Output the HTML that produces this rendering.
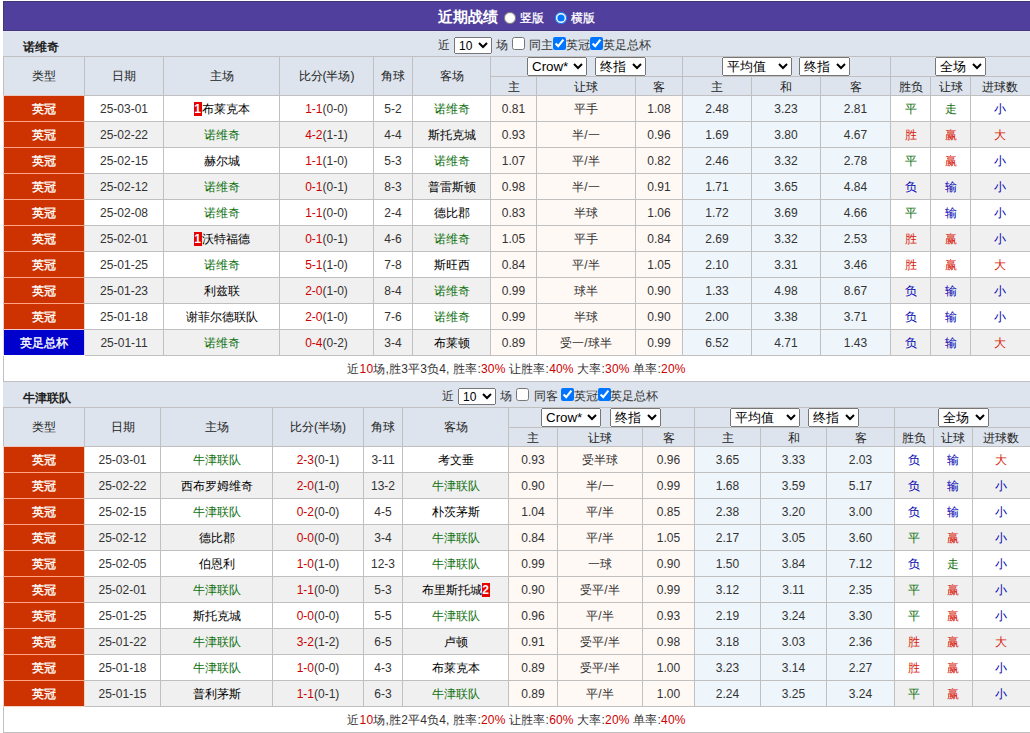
<!DOCTYPE html><html><head><meta charset="utf-8"><style>
html,body{margin:0;padding:0;background:#fff;overflow:hidden}
body{width:1030px;height:733px;position:relative;font-family:"Liberation Sans",sans-serif;font-size:12px;color:#000}
body>div{position:absolute}
.t{text-align:center;white-space:nowrap;overflow:visible}
.b{font-weight:bold;color:#222}
.r{color:#cc0000}
.bd{display:inline-block;background:#e60000;color:#fff;font-weight:bold;width:8px;height:14px;line-height:14px;text-align:center;vertical-align:middle;font-size:12px;overflow:hidden;margin-top:-2px}
.pb{left:3px;top:1px;width:1040px;height:28px;background:#513f9d;border:1px solid #433777}
.pl{left:3px;top:31px;width:1040px;height:1px;background:#e4e4f8}
.ttl{height:30px;line-height:30px;color:#fff;font-size:12px;white-space:nowrap}
.ttl b{font-size:15px}
.rd{position:absolute;margin:0;width:12px;height:12px}
.ct{height:17px;line-height:17px;color:#333;white-space:nowrap}
.cb{position:absolute;margin:0;width:13px;height:13px}
.s10{position:absolute;font-size:12px;height:17px;width:38px;padding:0;margin:0;font-family:"Liberation Sans",sans-serif}
select.sh{position:absolute;height:19px;font-size:13.33px;font-family:"Liberation Sans",sans-serif;padding:0;margin:0}
</style></head><body><div class="pb"></div><div class="ttl" style="left:438px;top:2px"><b>近期战绩</b></div><input type="radio" name="v" class="rd" style="left:504px;top:12px"><div class="ttl" style="left:520px;top:3px;-webkit-text-stroke:0.3px #fff">竖版</div><input type="radio" name="v" class="rd" checked style="left:555px;top:12px"><div class="ttl" style="left:571px;top:3px;-webkit-text-stroke:0.3px #fff">横版</div><div style="left:3px;top:31px;width:1040px;height:25px;background:#dde4ed;"></div><div class="t b" style="left:23px;top:39px;height:16px;line-height:16px;text-align:left">诺维奇</div><div class="ct" style="left:438px;top:37px">近</div><select class="s10" style="left:454px;top:37px"><option>10</option></select><div class="ct" style="left:496px;top:37px">场</div><input type="checkbox" class="cb" style="left:512px;top:37px"><div class="ct" style="left:529px;top:37px">同主</div><input type="checkbox" checked class="cb" style="left:553px;top:37px"><div class="ct" style="left:566px;top:37px">英冠</div><input type="checkbox" checked class="cb" style="left:590px;top:37px"><div class="ct" style="left:603px;top:37px">英足总杯</div><div style="left:3px;top:56px;width:1040px;height:39px;background:#dde4ed;"></div><div style="left:3px;top:96px;width:1040px;height:25px;background:#ffffff;"></div><div style="left:490px;top:96px;width:192px;height:25px;background:#fff9f5;"></div><div style="left:682px;top:96px;width:208px;height:25px;background:#eef6fb;"></div><div style="left:3px;top:96px;width:81px;height:25px;background:#cc3300;"></div><div style="left:3px;top:122px;width:1040px;height:25px;background:#f0f0f0;"></div><div style="left:490px;top:122px;width:192px;height:25px;background:#fff9f5;"></div><div style="left:682px;top:122px;width:208px;height:25px;background:#eef6fb;"></div><div style="left:3px;top:122px;width:81px;height:25px;background:#cc3300;"></div><div style="left:3px;top:148px;width:1040px;height:25px;background:#ffffff;"></div><div style="left:490px;top:148px;width:192px;height:25px;background:#fff9f5;"></div><div style="left:682px;top:148px;width:208px;height:25px;background:#eef6fb;"></div><div style="left:3px;top:148px;width:81px;height:25px;background:#cc3300;"></div><div style="left:3px;top:174px;width:1040px;height:25px;background:#f0f0f0;"></div><div style="left:490px;top:174px;width:192px;height:25px;background:#fff9f5;"></div><div style="left:682px;top:174px;width:208px;height:25px;background:#eef6fb;"></div><div style="left:3px;top:174px;width:81px;height:25px;background:#cc3300;"></div><div style="left:3px;top:200px;width:1040px;height:25px;background:#ffffff;"></div><div style="left:490px;top:200px;width:192px;height:25px;background:#fff9f5;"></div><div style="left:682px;top:200px;width:208px;height:25px;background:#eef6fb;"></div><div style="left:3px;top:200px;width:81px;height:25px;background:#cc3300;"></div><div style="left:3px;top:226px;width:1040px;height:25px;background:#f0f0f0;"></div><div style="left:490px;top:226px;width:192px;height:25px;background:#fff9f5;"></div><div style="left:682px;top:226px;width:208px;height:25px;background:#eef6fb;"></div><div style="left:3px;top:226px;width:81px;height:25px;background:#cc3300;"></div><div style="left:3px;top:252px;width:1040px;height:25px;background:#ffffff;"></div><div style="left:490px;top:252px;width:192px;height:25px;background:#fff9f5;"></div><div style="left:682px;top:252px;width:208px;height:25px;background:#eef6fb;"></div><div style="left:3px;top:252px;width:81px;height:25px;background:#cc3300;"></div><div style="left:3px;top:278px;width:1040px;height:25px;background:#f0f0f0;"></div><div style="left:490px;top:278px;width:192px;height:25px;background:#fff9f5;"></div><div style="left:682px;top:278px;width:208px;height:25px;background:#eef6fb;"></div><div style="left:3px;top:278px;width:81px;height:25px;background:#cc3300;"></div><div style="left:3px;top:304px;width:1040px;height:25px;background:#ffffff;"></div><div style="left:490px;top:304px;width:192px;height:25px;background:#fff9f5;"></div><div style="left:682px;top:304px;width:208px;height:25px;background:#eef6fb;"></div><div style="left:3px;top:304px;width:81px;height:25px;background:#cc3300;"></div><div style="left:3px;top:330px;width:1040px;height:25px;background:#f0f0f0;"></div><div style="left:490px;top:330px;width:192px;height:25px;background:#fff9f5;"></div><div style="left:682px;top:330px;width:208px;height:25px;background:#eef6fb;"></div><div style="left:3px;top:330px;width:81px;height:25px;background:#0000cc;"></div><div style="left:3px;top:356px;width:1040px;height:25px;background:#ffffff;"></div><div style="left:3px;top:56px;width:1040px;height:1px;background:#c0c0c0;"></div><div style="left:490px;top:76px;width:1040px;height:1px;background:#c0c0c0;"></div><div style="left:3px;top:95px;width:1040px;height:1px;background:#c0c0c0;"></div><div style="left:3px;top:121px;width:1040px;height:1px;background:#c0c0c0;"></div><div style="left:3px;top:147px;width:1040px;height:1px;background:#c0c0c0;"></div><div style="left:3px;top:173px;width:1040px;height:1px;background:#c0c0c0;"></div><div style="left:3px;top:199px;width:1040px;height:1px;background:#c0c0c0;"></div><div style="left:3px;top:225px;width:1040px;height:1px;background:#c0c0c0;"></div><div style="left:3px;top:251px;width:1040px;height:1px;background:#c0c0c0;"></div><div style="left:3px;top:277px;width:1040px;height:1px;background:#c0c0c0;"></div><div style="left:3px;top:303px;width:1040px;height:1px;background:#c0c0c0;"></div><div style="left:3px;top:329px;width:1040px;height:1px;background:#c0c0c0;"></div><div style="left:3px;top:355px;width:1040px;height:1px;background:#c0c0c0;"></div><div style="left:3px;top:381px;width:1040px;height:1px;background:#c0c0c0;"></div><div style="left:3px;top:56px;width:1px;height:326px;background:#c0c0c0;"></div><div style="left:84px;top:56px;width:1px;height:300px;background:#c0c0c0;"></div><div style="left:163px;top:56px;width:1px;height:300px;background:#c0c0c0;"></div><div style="left:279px;top:56px;width:1px;height:300px;background:#c0c0c0;"></div><div style="left:373px;top:56px;width:1px;height:300px;background:#c0c0c0;"></div><div style="left:412px;top:56px;width:1px;height:300px;background:#c0c0c0;"></div><div style="left:490px;top:56px;width:1px;height:300px;background:#c0c0c0;"></div><div style="left:536px;top:76px;width:1px;height:280px;background:#c0c0c0;"></div><div style="left:635px;top:76px;width:1px;height:280px;background:#c0c0c0;"></div><div style="left:682px;top:56px;width:1px;height:300px;background:#c0c0c0;"></div><div style="left:751px;top:76px;width:1px;height:280px;background:#c0c0c0;"></div><div style="left:820px;top:76px;width:1px;height:280px;background:#c0c0c0;"></div><div style="left:890px;top:56px;width:1px;height:300px;background:#c0c0c0;"></div><div style="left:930px;top:76px;width:1px;height:280px;background:#c0c0c0;"></div><div style="left:970px;top:76px;width:1px;height:280px;background:#c0c0c0;"></div><div style="left:3px;top:95px;width:1px;height:26px;background:#f3d2c6;"></div><div style="left:84px;top:96px;width:1px;height:25px;background:#f3d2c6;"></div><div style="left:4px;top:121px;width:80px;height:1px;background:#ffa585;"></div><div style="left:3px;top:122px;width:1px;height:25px;background:#f3d2c6;"></div><div style="left:84px;top:122px;width:1px;height:25px;background:#f3d2c6;"></div><div style="left:4px;top:147px;width:80px;height:1px;background:#ffa585;"></div><div style="left:3px;top:148px;width:1px;height:25px;background:#f3d2c6;"></div><div style="left:84px;top:148px;width:1px;height:25px;background:#f3d2c6;"></div><div style="left:4px;top:173px;width:80px;height:1px;background:#ffa585;"></div><div style="left:3px;top:174px;width:1px;height:25px;background:#f3d2c6;"></div><div style="left:84px;top:174px;width:1px;height:25px;background:#f3d2c6;"></div><div style="left:4px;top:199px;width:80px;height:1px;background:#ffa585;"></div><div style="left:3px;top:200px;width:1px;height:25px;background:#f3d2c6;"></div><div style="left:84px;top:200px;width:1px;height:25px;background:#f3d2c6;"></div><div style="left:4px;top:225px;width:80px;height:1px;background:#ffa585;"></div><div style="left:3px;top:226px;width:1px;height:25px;background:#f3d2c6;"></div><div style="left:84px;top:226px;width:1px;height:25px;background:#f3d2c6;"></div><div style="left:4px;top:251px;width:80px;height:1px;background:#ffa585;"></div><div style="left:3px;top:252px;width:1px;height:25px;background:#f3d2c6;"></div><div style="left:84px;top:252px;width:1px;height:25px;background:#f3d2c6;"></div><div style="left:4px;top:277px;width:80px;height:1px;background:#ffa585;"></div><div style="left:3px;top:278px;width:1px;height:25px;background:#f3d2c6;"></div><div style="left:84px;top:278px;width:1px;height:25px;background:#f3d2c6;"></div><div style="left:4px;top:303px;width:80px;height:1px;background:#ffa585;"></div><div style="left:3px;top:304px;width:1px;height:25px;background:#f3d2c6;"></div><div style="left:84px;top:304px;width:1px;height:25px;background:#f3d2c6;"></div><div style="left:4px;top:329px;width:80px;height:1px;background:#f4c8d0;"></div><div style="left:3px;top:330px;width:1px;height:25px;background:#e8d0e8;"></div><div style="left:84px;top:330px;width:1px;height:25px;background:#e8d0e8;"></div><div style="left:3px;top:355px;width:82px;height:1px;background:#ffffff;"></div><div style="left:4px;top:95px;width:80px;height:1px;background:#e8c8c0;"></div><div class="t" style="left:4px;top:57px;width:80px;height:38px;line-height:38px;color:#222">类型</div><div class="t" style="left:85px;top:57px;width:78px;height:38px;line-height:38px;color:#222">日期</div><div class="t" style="left:164px;top:57px;width:115px;height:38px;line-height:38px;color:#222">主场</div><div class="t" style="left:280px;top:57px;width:93px;height:38px;line-height:38px;color:#222">比分(半场)</div><div class="t" style="left:374px;top:57px;width:38px;height:38px;line-height:38px;color:#222">角球</div><div class="t" style="left:413px;top:57px;width:77px;height:38px;line-height:38px;color:#222">客场</div><div class="t" style="left:491px;top:78px;width:45px;height:18px;line-height:18px;color:#222">主</div><div class="t" style="left:537px;top:78px;width:98px;height:18px;line-height:18px;color:#222">让球</div><div class="t" style="left:636px;top:78px;width:46px;height:18px;line-height:18px;color:#222">客</div><div class="t" style="left:683px;top:78px;width:68px;height:18px;line-height:18px;color:#222">主</div><div class="t" style="left:752px;top:78px;width:68px;height:18px;line-height:18px;color:#222">和</div><div class="t" style="left:821px;top:78px;width:69px;height:18px;line-height:18px;color:#222">客</div><div class="t" style="left:891px;top:78px;width:39px;height:18px;line-height:18px;color:#222">胜负</div><div class="t" style="left:931px;top:78px;width:39px;height:18px;line-height:18px;color:#222">让球</div><div class="t" style="left:971px;top:78px;width:58px;height:18px;line-height:18px;color:#222">进球数</div><select class="sh" style="left:527px;top:57px;width:60px"><option>Crow*</option></select><select class="sh" style="left:595px;top:57px;width:51px"><option>终指</option></select><select class="sh" style="left:722px;top:57px;width:70px"><option>平均值</option></select><select class="sh" style="left:799px;top:57px;width:51px"><option>终指</option></select><select class="sh" style="left:935px;top:57px;width:51px"><option>全场</option></select><div class="t" style="left:4px;top:97px;width:80px;height:25px;line-height:25px;color:#fff;-webkit-text-stroke:0.35px #fff">英冠</div><div class="t" style="left:85px;top:97px;width:78px;height:25px;line-height:25px;color:#333">25-03-01</div><div class="t" style="left:164px;top:97px;width:115px;height:25px;line-height:25px;"><span class="bd">1</span>布莱克本</div><div class="t" style="left:280px;top:97px;width:93px;height:25px;line-height:25px;color:#333"><span style="color:#cc0000">1-1</span>(0-0)</div><div class="t" style="left:374px;top:97px;width:38px;height:25px;line-height:25px;color:#333">5-2</div><div class="t" style="left:413px;top:97px;width:77px;height:25px;line-height:25px;"><span style="color:#0e700e">诺维奇</span></div><div class="t" style="left:491px;top:97px;width:45px;height:25px;line-height:25px;color:#333">0.81</div><div class="t" style="left:537px;top:97px;width:98px;height:25px;line-height:25px;color:#333">平手</div><div class="t" style="left:636px;top:97px;width:46px;height:25px;line-height:25px;color:#333">1.08</div><div class="t" style="left:683px;top:97px;width:68px;height:25px;line-height:25px;color:#333">2.48</div><div class="t" style="left:752px;top:97px;width:68px;height:25px;line-height:25px;color:#333">3.23</div><div class="t" style="left:821px;top:97px;width:69px;height:25px;line-height:25px;color:#333">2.81</div><div class="t" style="left:891px;top:97px;width:39px;height:25px;line-height:25px;color:#0e700e">平</div><div class="t" style="left:931px;top:97px;width:39px;height:25px;line-height:25px;color:#0e700e">走</div><div class="t" style="left:971px;top:97px;width:58px;height:25px;line-height:25px;color:#0000b0">小</div><div class="t" style="left:4px;top:123px;width:80px;height:25px;line-height:25px;color:#fff;-webkit-text-stroke:0.35px #fff">英冠</div><div class="t" style="left:85px;top:123px;width:78px;height:25px;line-height:25px;color:#333">25-02-22</div><div class="t" style="left:164px;top:123px;width:115px;height:25px;line-height:25px;"><span style="color:#0e700e">诺维奇</span></div><div class="t" style="left:280px;top:123px;width:93px;height:25px;line-height:25px;color:#333"><span style="color:#cc0000">4-2</span>(1-1)</div><div class="t" style="left:374px;top:123px;width:38px;height:25px;line-height:25px;color:#333">4-4</div><div class="t" style="left:413px;top:123px;width:77px;height:25px;line-height:25px;">斯托克城</div><div class="t" style="left:491px;top:123px;width:45px;height:25px;line-height:25px;color:#333">0.93</div><div class="t" style="left:537px;top:123px;width:98px;height:25px;line-height:25px;color:#333">半/一</div><div class="t" style="left:636px;top:123px;width:46px;height:25px;line-height:25px;color:#333">0.96</div><div class="t" style="left:683px;top:123px;width:68px;height:25px;line-height:25px;color:#333">1.69</div><div class="t" style="left:752px;top:123px;width:68px;height:25px;line-height:25px;color:#333">3.80</div><div class="t" style="left:821px;top:123px;width:69px;height:25px;line-height:25px;color:#333">4.67</div><div class="t" style="left:891px;top:123px;width:39px;height:25px;line-height:25px;color:#d81808">胜</div><div class="t" style="left:931px;top:123px;width:39px;height:25px;line-height:25px;color:#d81808">赢</div><div class="t" style="left:971px;top:123px;width:58px;height:25px;line-height:25px;color:#d81808">大</div><div class="t" style="left:4px;top:149px;width:80px;height:25px;line-height:25px;color:#fff;-webkit-text-stroke:0.35px #fff">英冠</div><div class="t" style="left:85px;top:149px;width:78px;height:25px;line-height:25px;color:#333">25-02-15</div><div class="t" style="left:164px;top:149px;width:115px;height:25px;line-height:25px;">赫尔城</div><div class="t" style="left:280px;top:149px;width:93px;height:25px;line-height:25px;color:#333"><span style="color:#cc0000">1-1</span>(1-0)</div><div class="t" style="left:374px;top:149px;width:38px;height:25px;line-height:25px;color:#333">5-3</div><div class="t" style="left:413px;top:149px;width:77px;height:25px;line-height:25px;"><span style="color:#0e700e">诺维奇</span></div><div class="t" style="left:491px;top:149px;width:45px;height:25px;line-height:25px;color:#333">1.07</div><div class="t" style="left:537px;top:149px;width:98px;height:25px;line-height:25px;color:#333">平/半</div><div class="t" style="left:636px;top:149px;width:46px;height:25px;line-height:25px;color:#333">0.82</div><div class="t" style="left:683px;top:149px;width:68px;height:25px;line-height:25px;color:#333">2.46</div><div class="t" style="left:752px;top:149px;width:68px;height:25px;line-height:25px;color:#333">3.32</div><div class="t" style="left:821px;top:149px;width:69px;height:25px;line-height:25px;color:#333">2.78</div><div class="t" style="left:891px;top:149px;width:39px;height:25px;line-height:25px;color:#0e700e">平</div><div class="t" style="left:931px;top:149px;width:39px;height:25px;line-height:25px;color:#d81808">赢</div><div class="t" style="left:971px;top:149px;width:58px;height:25px;line-height:25px;color:#0000b0">小</div><div class="t" style="left:4px;top:175px;width:80px;height:25px;line-height:25px;color:#fff;-webkit-text-stroke:0.35px #fff">英冠</div><div class="t" style="left:85px;top:175px;width:78px;height:25px;line-height:25px;color:#333">25-02-12</div><div class="t" style="left:164px;top:175px;width:115px;height:25px;line-height:25px;"><span style="color:#0e700e">诺维奇</span></div><div class="t" style="left:280px;top:175px;width:93px;height:25px;line-height:25px;color:#333"><span style="color:#cc0000">0-1</span>(0-1)</div><div class="t" style="left:374px;top:175px;width:38px;height:25px;line-height:25px;color:#333">8-3</div><div class="t" style="left:413px;top:175px;width:77px;height:25px;line-height:25px;">普雷斯顿</div><div class="t" style="left:491px;top:175px;width:45px;height:25px;line-height:25px;color:#333">0.98</div><div class="t" style="left:537px;top:175px;width:98px;height:25px;line-height:25px;color:#333">半/一</div><div class="t" style="left:636px;top:175px;width:46px;height:25px;line-height:25px;color:#333">0.91</div><div class="t" style="left:683px;top:175px;width:68px;height:25px;line-height:25px;color:#333">1.71</div><div class="t" style="left:752px;top:175px;width:68px;height:25px;line-height:25px;color:#333">3.65</div><div class="t" style="left:821px;top:175px;width:69px;height:25px;line-height:25px;color:#333">4.84</div><div class="t" style="left:891px;top:175px;width:39px;height:25px;line-height:25px;color:#0000b0">负</div><div class="t" style="left:931px;top:175px;width:39px;height:25px;line-height:25px;color:#0000b0">输</div><div class="t" style="left:971px;top:175px;width:58px;height:25px;line-height:25px;color:#0000b0">小</div><div class="t" style="left:4px;top:201px;width:80px;height:25px;line-height:25px;color:#fff;-webkit-text-stroke:0.35px #fff">英冠</div><div class="t" style="left:85px;top:201px;width:78px;height:25px;line-height:25px;color:#333">25-02-08</div><div class="t" style="left:164px;top:201px;width:115px;height:25px;line-height:25px;"><span style="color:#0e700e">诺维奇</span></div><div class="t" style="left:280px;top:201px;width:93px;height:25px;line-height:25px;color:#333"><span style="color:#cc0000">1-1</span>(0-0)</div><div class="t" style="left:374px;top:201px;width:38px;height:25px;line-height:25px;color:#333">2-4</div><div class="t" style="left:413px;top:201px;width:77px;height:25px;line-height:25px;">德比郡</div><div class="t" style="left:491px;top:201px;width:45px;height:25px;line-height:25px;color:#333">0.83</div><div class="t" style="left:537px;top:201px;width:98px;height:25px;line-height:25px;color:#333">半球</div><div class="t" style="left:636px;top:201px;width:46px;height:25px;line-height:25px;color:#333">1.06</div><div class="t" style="left:683px;top:201px;width:68px;height:25px;line-height:25px;color:#333">1.72</div><div class="t" style="left:752px;top:201px;width:68px;height:25px;line-height:25px;color:#333">3.69</div><div class="t" style="left:821px;top:201px;width:69px;height:25px;line-height:25px;color:#333">4.66</div><div class="t" style="left:891px;top:201px;width:39px;height:25px;line-height:25px;color:#0e700e">平</div><div class="t" style="left:931px;top:201px;width:39px;height:25px;line-height:25px;color:#0000b0">输</div><div class="t" style="left:971px;top:201px;width:58px;height:25px;line-height:25px;color:#0000b0">小</div><div class="t" style="left:4px;top:227px;width:80px;height:25px;line-height:25px;color:#fff;-webkit-text-stroke:0.35px #fff">英冠</div><div class="t" style="left:85px;top:227px;width:78px;height:25px;line-height:25px;color:#333">25-02-01</div><div class="t" style="left:164px;top:227px;width:115px;height:25px;line-height:25px;"><span class="bd">1</span>沃特福德</div><div class="t" style="left:280px;top:227px;width:93px;height:25px;line-height:25px;color:#333"><span style="color:#cc0000">0-1</span>(0-1)</div><div class="t" style="left:374px;top:227px;width:38px;height:25px;line-height:25px;color:#333">4-6</div><div class="t" style="left:413px;top:227px;width:77px;height:25px;line-height:25px;"><span style="color:#0e700e">诺维奇</span></div><div class="t" style="left:491px;top:227px;width:45px;height:25px;line-height:25px;color:#333">1.05</div><div class="t" style="left:537px;top:227px;width:98px;height:25px;line-height:25px;color:#333">平手</div><div class="t" style="left:636px;top:227px;width:46px;height:25px;line-height:25px;color:#333">0.84</div><div class="t" style="left:683px;top:227px;width:68px;height:25px;line-height:25px;color:#333">2.69</div><div class="t" style="left:752px;top:227px;width:68px;height:25px;line-height:25px;color:#333">3.32</div><div class="t" style="left:821px;top:227px;width:69px;height:25px;line-height:25px;color:#333">2.53</div><div class="t" style="left:891px;top:227px;width:39px;height:25px;line-height:25px;color:#d81808">胜</div><div class="t" style="left:931px;top:227px;width:39px;height:25px;line-height:25px;color:#d81808">赢</div><div class="t" style="left:971px;top:227px;width:58px;height:25px;line-height:25px;color:#0000b0">小</div><div class="t" style="left:4px;top:253px;width:80px;height:25px;line-height:25px;color:#fff;-webkit-text-stroke:0.35px #fff">英冠</div><div class="t" style="left:85px;top:253px;width:78px;height:25px;line-height:25px;color:#333">25-01-25</div><div class="t" style="left:164px;top:253px;width:115px;height:25px;line-height:25px;"><span style="color:#0e700e">诺维奇</span></div><div class="t" style="left:280px;top:253px;width:93px;height:25px;line-height:25px;color:#333"><span style="color:#cc0000">5-1</span>(1-0)</div><div class="t" style="left:374px;top:253px;width:38px;height:25px;line-height:25px;color:#333">7-8</div><div class="t" style="left:413px;top:253px;width:77px;height:25px;line-height:25px;">斯旺西</div><div class="t" style="left:491px;top:253px;width:45px;height:25px;line-height:25px;color:#333">0.84</div><div class="t" style="left:537px;top:253px;width:98px;height:25px;line-height:25px;color:#333">平/半</div><div class="t" style="left:636px;top:253px;width:46px;height:25px;line-height:25px;color:#333">1.05</div><div class="t" style="left:683px;top:253px;width:68px;height:25px;line-height:25px;color:#333">2.10</div><div class="t" style="left:752px;top:253px;width:68px;height:25px;line-height:25px;color:#333">3.31</div><div class="t" style="left:821px;top:253px;width:69px;height:25px;line-height:25px;color:#333">3.46</div><div class="t" style="left:891px;top:253px;width:39px;height:25px;line-height:25px;color:#d81808">胜</div><div class="t" style="left:931px;top:253px;width:39px;height:25px;line-height:25px;color:#d81808">赢</div><div class="t" style="left:971px;top:253px;width:58px;height:25px;line-height:25px;color:#d81808">大</div><div class="t" style="left:4px;top:279px;width:80px;height:25px;line-height:25px;color:#fff;-webkit-text-stroke:0.35px #fff">英冠</div><div class="t" style="left:85px;top:279px;width:78px;height:25px;line-height:25px;color:#333">25-01-23</div><div class="t" style="left:164px;top:279px;width:115px;height:25px;line-height:25px;">利兹联</div><div class="t" style="left:280px;top:279px;width:93px;height:25px;line-height:25px;color:#333"><span style="color:#cc0000">2-0</span>(1-0)</div><div class="t" style="left:374px;top:279px;width:38px;height:25px;line-height:25px;color:#333">8-4</div><div class="t" style="left:413px;top:279px;width:77px;height:25px;line-height:25px;"><span style="color:#0e700e">诺维奇</span></div><div class="t" style="left:491px;top:279px;width:45px;height:25px;line-height:25px;color:#333">0.99</div><div class="t" style="left:537px;top:279px;width:98px;height:25px;line-height:25px;color:#333">球半</div><div class="t" style="left:636px;top:279px;width:46px;height:25px;line-height:25px;color:#333">0.90</div><div class="t" style="left:683px;top:279px;width:68px;height:25px;line-height:25px;color:#333">1.33</div><div class="t" style="left:752px;top:279px;width:68px;height:25px;line-height:25px;color:#333">4.98</div><div class="t" style="left:821px;top:279px;width:69px;height:25px;line-height:25px;color:#333">8.67</div><div class="t" style="left:891px;top:279px;width:39px;height:25px;line-height:25px;color:#0000b0">负</div><div class="t" style="left:931px;top:279px;width:39px;height:25px;line-height:25px;color:#0000b0">输</div><div class="t" style="left:971px;top:279px;width:58px;height:25px;line-height:25px;color:#0000b0">小</div><div class="t" style="left:4px;top:305px;width:80px;height:25px;line-height:25px;color:#fff;-webkit-text-stroke:0.35px #fff">英冠</div><div class="t" style="left:85px;top:305px;width:78px;height:25px;line-height:25px;color:#333">25-01-18</div><div class="t" style="left:164px;top:305px;width:115px;height:25px;line-height:25px;">谢菲尔德联队</div><div class="t" style="left:280px;top:305px;width:93px;height:25px;line-height:25px;color:#333"><span style="color:#cc0000">2-0</span>(1-0)</div><div class="t" style="left:374px;top:305px;width:38px;height:25px;line-height:25px;color:#333">7-6</div><div class="t" style="left:413px;top:305px;width:77px;height:25px;line-height:25px;"><span style="color:#0e700e">诺维奇</span></div><div class="t" style="left:491px;top:305px;width:45px;height:25px;line-height:25px;color:#333">0.99</div><div class="t" style="left:537px;top:305px;width:98px;height:25px;line-height:25px;color:#333">半球</div><div class="t" style="left:636px;top:305px;width:46px;height:25px;line-height:25px;color:#333">0.90</div><div class="t" style="left:683px;top:305px;width:68px;height:25px;line-height:25px;color:#333">2.00</div><div class="t" style="left:752px;top:305px;width:68px;height:25px;line-height:25px;color:#333">3.38</div><div class="t" style="left:821px;top:305px;width:69px;height:25px;line-height:25px;color:#333">3.71</div><div class="t" style="left:891px;top:305px;width:39px;height:25px;line-height:25px;color:#0000b0">负</div><div class="t" style="left:931px;top:305px;width:39px;height:25px;line-height:25px;color:#0000b0">输</div><div class="t" style="left:971px;top:305px;width:58px;height:25px;line-height:25px;color:#0000b0">小</div><div class="t" style="left:4px;top:331px;width:80px;height:25px;line-height:25px;color:#fff;-webkit-text-stroke:0.35px #fff">英足总杯</div><div class="t" style="left:85px;top:331px;width:78px;height:25px;line-height:25px;color:#333">25-01-11</div><div class="t" style="left:164px;top:331px;width:115px;height:25px;line-height:25px;"><span style="color:#0e700e">诺维奇</span></div><div class="t" style="left:280px;top:331px;width:93px;height:25px;line-height:25px;color:#333"><span style="color:#cc0000">0-4</span>(0-2)</div><div class="t" style="left:374px;top:331px;width:38px;height:25px;line-height:25px;color:#333">3-4</div><div class="t" style="left:413px;top:331px;width:77px;height:25px;line-height:25px;">布莱顿</div><div class="t" style="left:491px;top:331px;width:45px;height:25px;line-height:25px;color:#333">0.89</div><div class="t" style="left:537px;top:331px;width:98px;height:25px;line-height:25px;color:#333">受一/球半</div><div class="t" style="left:636px;top:331px;width:46px;height:25px;line-height:25px;color:#333">0.99</div><div class="t" style="left:683px;top:331px;width:68px;height:25px;line-height:25px;color:#333">6.52</div><div class="t" style="left:752px;top:331px;width:68px;height:25px;line-height:25px;color:#333">4.71</div><div class="t" style="left:821px;top:331px;width:69px;height:25px;line-height:25px;color:#333">1.43</div><div class="t" style="left:891px;top:331px;width:39px;height:25px;line-height:25px;color:#0000b0">负</div><div class="t" style="left:931px;top:331px;width:39px;height:25px;line-height:25px;color:#0000b0">输</div><div class="t" style="left:971px;top:331px;width:58px;height:25px;line-height:25px;color:#d81808">大</div><div class="t" style="left:3px;top:357px;width:1027px;height:25px;line-height:25px;color:#333;letter-spacing:0.18px">近<span class="r">10</span>场,胜3平3负4, 胜率:<span class="r">30%</span> 让胜率:<span class="r">40%</span> 大率:<span class="r">30%</span> 单率:<span class="r">20%</span></div><div style="left:3px;top:382px;width:1040px;height:25px;background:#dde4ed;"></div><div class="t b" style="left:23px;top:390px;height:16px;line-height:16px;text-align:left">牛津联队</div><div class="ct" style="left:442px;top:388px">近</div><select class="s10" style="left:458px;top:388px"><option>10</option></select><div class="ct" style="left:500px;top:388px">场</div><input type="checkbox" class="cb" style="left:516px;top:388px"><div class="ct" style="left:534px;top:388px">同客</div><input type="checkbox" checked class="cb" style="left:561px;top:388px"><div class="ct" style="left:574px;top:388px">英冠</div><input type="checkbox" checked class="cb" style="left:598px;top:388px"><div class="ct" style="left:610px;top:388px">英足总杯</div><div style="left:3px;top:407px;width:1040px;height:39px;background:#dde4ed;"></div><div style="left:3px;top:447px;width:1040px;height:25px;background:#ffffff;"></div><div style="left:508px;top:447px;width:186px;height:25px;background:#fff9f5;"></div><div style="left:694px;top:447px;width:200px;height:25px;background:#eef6fb;"></div><div style="left:3px;top:447px;width:81px;height:25px;background:#cc3300;"></div><div style="left:3px;top:473px;width:1040px;height:25px;background:#f0f0f0;"></div><div style="left:508px;top:473px;width:186px;height:25px;background:#fff9f5;"></div><div style="left:694px;top:473px;width:200px;height:25px;background:#eef6fb;"></div><div style="left:3px;top:473px;width:81px;height:25px;background:#cc3300;"></div><div style="left:3px;top:499px;width:1040px;height:25px;background:#ffffff;"></div><div style="left:508px;top:499px;width:186px;height:25px;background:#fff9f5;"></div><div style="left:694px;top:499px;width:200px;height:25px;background:#eef6fb;"></div><div style="left:3px;top:499px;width:81px;height:25px;background:#cc3300;"></div><div style="left:3px;top:525px;width:1040px;height:25px;background:#f0f0f0;"></div><div style="left:508px;top:525px;width:186px;height:25px;background:#fff9f5;"></div><div style="left:694px;top:525px;width:200px;height:25px;background:#eef6fb;"></div><div style="left:3px;top:525px;width:81px;height:25px;background:#cc3300;"></div><div style="left:3px;top:551px;width:1040px;height:25px;background:#ffffff;"></div><div style="left:508px;top:551px;width:186px;height:25px;background:#fff9f5;"></div><div style="left:694px;top:551px;width:200px;height:25px;background:#eef6fb;"></div><div style="left:3px;top:551px;width:81px;height:25px;background:#cc3300;"></div><div style="left:3px;top:577px;width:1040px;height:25px;background:#f0f0f0;"></div><div style="left:508px;top:577px;width:186px;height:25px;background:#fff9f5;"></div><div style="left:694px;top:577px;width:200px;height:25px;background:#eef6fb;"></div><div style="left:3px;top:577px;width:81px;height:25px;background:#cc3300;"></div><div style="left:3px;top:603px;width:1040px;height:25px;background:#ffffff;"></div><div style="left:508px;top:603px;width:186px;height:25px;background:#fff9f5;"></div><div style="left:694px;top:603px;width:200px;height:25px;background:#eef6fb;"></div><div style="left:3px;top:603px;width:81px;height:25px;background:#cc3300;"></div><div style="left:3px;top:629px;width:1040px;height:25px;background:#f0f0f0;"></div><div style="left:508px;top:629px;width:186px;height:25px;background:#fff9f5;"></div><div style="left:694px;top:629px;width:200px;height:25px;background:#eef6fb;"></div><div style="left:3px;top:629px;width:81px;height:25px;background:#cc3300;"></div><div style="left:3px;top:655px;width:1040px;height:25px;background:#ffffff;"></div><div style="left:508px;top:655px;width:186px;height:25px;background:#fff9f5;"></div><div style="left:694px;top:655px;width:200px;height:25px;background:#eef6fb;"></div><div style="left:3px;top:655px;width:81px;height:25px;background:#cc3300;"></div><div style="left:3px;top:681px;width:1040px;height:25px;background:#f0f0f0;"></div><div style="left:508px;top:681px;width:186px;height:25px;background:#fff9f5;"></div><div style="left:694px;top:681px;width:200px;height:25px;background:#eef6fb;"></div><div style="left:3px;top:681px;width:81px;height:25px;background:#cc3300;"></div><div style="left:3px;top:707px;width:1040px;height:25px;background:#ffffff;"></div><div style="left:3px;top:407px;width:1040px;height:1px;background:#c0c0c0;"></div><div style="left:508px;top:427px;width:1040px;height:1px;background:#c0c0c0;"></div><div style="left:3px;top:446px;width:1040px;height:1px;background:#c0c0c0;"></div><div style="left:3px;top:472px;width:1040px;height:1px;background:#c0c0c0;"></div><div style="left:3px;top:498px;width:1040px;height:1px;background:#c0c0c0;"></div><div style="left:3px;top:524px;width:1040px;height:1px;background:#c0c0c0;"></div><div style="left:3px;top:550px;width:1040px;height:1px;background:#c0c0c0;"></div><div style="left:3px;top:576px;width:1040px;height:1px;background:#c0c0c0;"></div><div style="left:3px;top:602px;width:1040px;height:1px;background:#c0c0c0;"></div><div style="left:3px;top:628px;width:1040px;height:1px;background:#c0c0c0;"></div><div style="left:3px;top:654px;width:1040px;height:1px;background:#c0c0c0;"></div><div style="left:3px;top:680px;width:1040px;height:1px;background:#c0c0c0;"></div><div style="left:3px;top:706px;width:1040px;height:1px;background:#c0c0c0;"></div><div style="left:3px;top:732px;width:1040px;height:1px;background:#c0c0c0;"></div><div style="left:3px;top:407px;width:1px;height:326px;background:#c0c0c0;"></div><div style="left:84px;top:407px;width:1px;height:300px;background:#c0c0c0;"></div><div style="left:160px;top:407px;width:1px;height:300px;background:#c0c0c0;"></div><div style="left:272px;top:407px;width:1px;height:300px;background:#c0c0c0;"></div><div style="left:363px;top:407px;width:1px;height:300px;background:#c0c0c0;"></div><div style="left:402px;top:407px;width:1px;height:300px;background:#c0c0c0;"></div><div style="left:508px;top:407px;width:1px;height:300px;background:#c0c0c0;"></div><div style="left:557px;top:427px;width:1px;height:280px;background:#c0c0c0;"></div><div style="left:642px;top:427px;width:1px;height:280px;background:#c0c0c0;"></div><div style="left:694px;top:407px;width:1px;height:300px;background:#c0c0c0;"></div><div style="left:760px;top:427px;width:1px;height:280px;background:#c0c0c0;"></div><div style="left:826px;top:427px;width:1px;height:280px;background:#c0c0c0;"></div><div style="left:894px;top:407px;width:1px;height:300px;background:#c0c0c0;"></div><div style="left:933px;top:427px;width:1px;height:280px;background:#c0c0c0;"></div><div style="left:972px;top:427px;width:1px;height:280px;background:#c0c0c0;"></div><div style="left:3px;top:446px;width:1px;height:26px;background:#f3d2c6;"></div><div style="left:84px;top:447px;width:1px;height:25px;background:#f3d2c6;"></div><div style="left:4px;top:472px;width:80px;height:1px;background:#ffa585;"></div><div style="left:3px;top:473px;width:1px;height:25px;background:#f3d2c6;"></div><div style="left:84px;top:473px;width:1px;height:25px;background:#f3d2c6;"></div><div style="left:4px;top:498px;width:80px;height:1px;background:#ffa585;"></div><div style="left:3px;top:499px;width:1px;height:25px;background:#f3d2c6;"></div><div style="left:84px;top:499px;width:1px;height:25px;background:#f3d2c6;"></div><div style="left:4px;top:524px;width:80px;height:1px;background:#ffa585;"></div><div style="left:3px;top:525px;width:1px;height:25px;background:#f3d2c6;"></div><div style="left:84px;top:525px;width:1px;height:25px;background:#f3d2c6;"></div><div style="left:4px;top:550px;width:80px;height:1px;background:#ffa585;"></div><div style="left:3px;top:551px;width:1px;height:25px;background:#f3d2c6;"></div><div style="left:84px;top:551px;width:1px;height:25px;background:#f3d2c6;"></div><div style="left:4px;top:576px;width:80px;height:1px;background:#ffa585;"></div><div style="left:3px;top:577px;width:1px;height:25px;background:#f3d2c6;"></div><div style="left:84px;top:577px;width:1px;height:25px;background:#f3d2c6;"></div><div style="left:4px;top:602px;width:80px;height:1px;background:#ffa585;"></div><div style="left:3px;top:603px;width:1px;height:25px;background:#f3d2c6;"></div><div style="left:84px;top:603px;width:1px;height:25px;background:#f3d2c6;"></div><div style="left:4px;top:628px;width:80px;height:1px;background:#ffa585;"></div><div style="left:3px;top:629px;width:1px;height:25px;background:#f3d2c6;"></div><div style="left:84px;top:629px;width:1px;height:25px;background:#f3d2c6;"></div><div style="left:4px;top:654px;width:80px;height:1px;background:#ffa585;"></div><div style="left:3px;top:655px;width:1px;height:25px;background:#f3d2c6;"></div><div style="left:84px;top:655px;width:1px;height:25px;background:#f3d2c6;"></div><div style="left:4px;top:680px;width:80px;height:1px;background:#ffa585;"></div><div style="left:3px;top:681px;width:1px;height:25px;background:#f3d2c6;"></div><div style="left:84px;top:681px;width:1px;height:25px;background:#f3d2c6;"></div><div style="left:3px;top:706px;width:82px;height:1px;background:#f3d2c6;"></div><div style="left:4px;top:446px;width:80px;height:1px;background:#e8c8c0;"></div><div class="t" style="left:4px;top:408px;width:80px;height:38px;line-height:38px;color:#222">类型</div><div class="t" style="left:85px;top:408px;width:75px;height:38px;line-height:38px;color:#222">日期</div><div class="t" style="left:161px;top:408px;width:111px;height:38px;line-height:38px;color:#222">主场</div><div class="t" style="left:273px;top:408px;width:90px;height:38px;line-height:38px;color:#222">比分(半场)</div><div class="t" style="left:364px;top:408px;width:38px;height:38px;line-height:38px;color:#222">角球</div><div class="t" style="left:403px;top:408px;width:105px;height:38px;line-height:38px;color:#222">客场</div><div class="t" style="left:509px;top:429px;width:48px;height:18px;line-height:18px;color:#222">主</div><div class="t" style="left:558px;top:429px;width:84px;height:18px;line-height:18px;color:#222">让球</div><div class="t" style="left:643px;top:429px;width:51px;height:18px;line-height:18px;color:#222">客</div><div class="t" style="left:695px;top:429px;width:65px;height:18px;line-height:18px;color:#222">主</div><div class="t" style="left:761px;top:429px;width:65px;height:18px;line-height:18px;color:#222">和</div><div class="t" style="left:827px;top:429px;width:67px;height:18px;line-height:18px;color:#222">客</div><div class="t" style="left:895px;top:429px;width:38px;height:18px;line-height:18px;color:#222">胜负</div><div class="t" style="left:934px;top:429px;width:38px;height:18px;line-height:18px;color:#222">让球</div><div class="t" style="left:973px;top:429px;width:56px;height:18px;line-height:18px;color:#222">进球数</div><select class="sh" style="left:541px;top:408px;width:60px"><option>Crow*</option></select><select class="sh" style="left:610px;top:408px;width:51px"><option>终指</option></select><select class="sh" style="left:730px;top:408px;width:70px"><option>平均值</option></select><select class="sh" style="left:808px;top:408px;width:51px"><option>终指</option></select><select class="sh" style="left:938px;top:408px;width:51px"><option>全场</option></select><div class="t" style="left:4px;top:448px;width:80px;height:25px;line-height:25px;color:#fff;-webkit-text-stroke:0.35px #fff">英冠</div><div class="t" style="left:85px;top:448px;width:75px;height:25px;line-height:25px;color:#333">25-03-01</div><div class="t" style="left:161px;top:448px;width:111px;height:25px;line-height:25px;"><span style="color:#0e700e">牛津联队</span></div><div class="t" style="left:273px;top:448px;width:90px;height:25px;line-height:25px;color:#333"><span style="color:#cc0000">2-3</span>(0-1)</div><div class="t" style="left:364px;top:448px;width:38px;height:25px;line-height:25px;color:#333">3-11</div><div class="t" style="left:403px;top:448px;width:105px;height:25px;line-height:25px;">考文垂</div><div class="t" style="left:509px;top:448px;width:48px;height:25px;line-height:25px;color:#333">0.93</div><div class="t" style="left:558px;top:448px;width:84px;height:25px;line-height:25px;color:#333">受半球</div><div class="t" style="left:643px;top:448px;width:51px;height:25px;line-height:25px;color:#333">0.96</div><div class="t" style="left:695px;top:448px;width:65px;height:25px;line-height:25px;color:#333">3.65</div><div class="t" style="left:761px;top:448px;width:65px;height:25px;line-height:25px;color:#333">3.33</div><div class="t" style="left:827px;top:448px;width:67px;height:25px;line-height:25px;color:#333">2.03</div><div class="t" style="left:895px;top:448px;width:38px;height:25px;line-height:25px;color:#0000b0">负</div><div class="t" style="left:934px;top:448px;width:38px;height:25px;line-height:25px;color:#0000b0">输</div><div class="t" style="left:973px;top:448px;width:56px;height:25px;line-height:25px;color:#d81808">大</div><div class="t" style="left:4px;top:474px;width:80px;height:25px;line-height:25px;color:#fff;-webkit-text-stroke:0.35px #fff">英冠</div><div class="t" style="left:85px;top:474px;width:75px;height:25px;line-height:25px;color:#333">25-02-22</div><div class="t" style="left:161px;top:474px;width:111px;height:25px;line-height:25px;">西布罗姆维奇</div><div class="t" style="left:273px;top:474px;width:90px;height:25px;line-height:25px;color:#333"><span style="color:#cc0000">2-0</span>(1-0)</div><div class="t" style="left:364px;top:474px;width:38px;height:25px;line-height:25px;color:#333">13-2</div><div class="t" style="left:403px;top:474px;width:105px;height:25px;line-height:25px;"><span style="color:#0e700e">牛津联队</span></div><div class="t" style="left:509px;top:474px;width:48px;height:25px;line-height:25px;color:#333">0.90</div><div class="t" style="left:558px;top:474px;width:84px;height:25px;line-height:25px;color:#333">半/一</div><div class="t" style="left:643px;top:474px;width:51px;height:25px;line-height:25px;color:#333">0.99</div><div class="t" style="left:695px;top:474px;width:65px;height:25px;line-height:25px;color:#333">1.68</div><div class="t" style="left:761px;top:474px;width:65px;height:25px;line-height:25px;color:#333">3.59</div><div class="t" style="left:827px;top:474px;width:67px;height:25px;line-height:25px;color:#333">5.17</div><div class="t" style="left:895px;top:474px;width:38px;height:25px;line-height:25px;color:#0000b0">负</div><div class="t" style="left:934px;top:474px;width:38px;height:25px;line-height:25px;color:#0000b0">输</div><div class="t" style="left:973px;top:474px;width:56px;height:25px;line-height:25px;color:#0000b0">小</div><div class="t" style="left:4px;top:500px;width:80px;height:25px;line-height:25px;color:#fff;-webkit-text-stroke:0.35px #fff">英冠</div><div class="t" style="left:85px;top:500px;width:75px;height:25px;line-height:25px;color:#333">25-02-15</div><div class="t" style="left:161px;top:500px;width:111px;height:25px;line-height:25px;"><span style="color:#0e700e">牛津联队</span></div><div class="t" style="left:273px;top:500px;width:90px;height:25px;line-height:25px;color:#333"><span style="color:#cc0000">0-2</span>(0-0)</div><div class="t" style="left:364px;top:500px;width:38px;height:25px;line-height:25px;color:#333">4-5</div><div class="t" style="left:403px;top:500px;width:105px;height:25px;line-height:25px;">朴茨茅斯</div><div class="t" style="left:509px;top:500px;width:48px;height:25px;line-height:25px;color:#333">1.04</div><div class="t" style="left:558px;top:500px;width:84px;height:25px;line-height:25px;color:#333">平/半</div><div class="t" style="left:643px;top:500px;width:51px;height:25px;line-height:25px;color:#333">0.85</div><div class="t" style="left:695px;top:500px;width:65px;height:25px;line-height:25px;color:#333">2.38</div><div class="t" style="left:761px;top:500px;width:65px;height:25px;line-height:25px;color:#333">3.20</div><div class="t" style="left:827px;top:500px;width:67px;height:25px;line-height:25px;color:#333">3.00</div><div class="t" style="left:895px;top:500px;width:38px;height:25px;line-height:25px;color:#0000b0">负</div><div class="t" style="left:934px;top:500px;width:38px;height:25px;line-height:25px;color:#0000b0">输</div><div class="t" style="left:973px;top:500px;width:56px;height:25px;line-height:25px;color:#0000b0">小</div><div class="t" style="left:4px;top:526px;width:80px;height:25px;line-height:25px;color:#fff;-webkit-text-stroke:0.35px #fff">英冠</div><div class="t" style="left:85px;top:526px;width:75px;height:25px;line-height:25px;color:#333">25-02-12</div><div class="t" style="left:161px;top:526px;width:111px;height:25px;line-height:25px;">德比郡</div><div class="t" style="left:273px;top:526px;width:90px;height:25px;line-height:25px;color:#333"><span style="color:#cc0000">0-0</span>(0-0)</div><div class="t" style="left:364px;top:526px;width:38px;height:25px;line-height:25px;color:#333">3-4</div><div class="t" style="left:403px;top:526px;width:105px;height:25px;line-height:25px;"><span style="color:#0e700e">牛津联队</span></div><div class="t" style="left:509px;top:526px;width:48px;height:25px;line-height:25px;color:#333">0.84</div><div class="t" style="left:558px;top:526px;width:84px;height:25px;line-height:25px;color:#333">平/半</div><div class="t" style="left:643px;top:526px;width:51px;height:25px;line-height:25px;color:#333">1.05</div><div class="t" style="left:695px;top:526px;width:65px;height:25px;line-height:25px;color:#333">2.17</div><div class="t" style="left:761px;top:526px;width:65px;height:25px;line-height:25px;color:#333">3.05</div><div class="t" style="left:827px;top:526px;width:67px;height:25px;line-height:25px;color:#333">3.60</div><div class="t" style="left:895px;top:526px;width:38px;height:25px;line-height:25px;color:#0e700e">平</div><div class="t" style="left:934px;top:526px;width:38px;height:25px;line-height:25px;color:#d81808">赢</div><div class="t" style="left:973px;top:526px;width:56px;height:25px;line-height:25px;color:#0000b0">小</div><div class="t" style="left:4px;top:552px;width:80px;height:25px;line-height:25px;color:#fff;-webkit-text-stroke:0.35px #fff">英冠</div><div class="t" style="left:85px;top:552px;width:75px;height:25px;line-height:25px;color:#333">25-02-05</div><div class="t" style="left:161px;top:552px;width:111px;height:25px;line-height:25px;">伯恩利</div><div class="t" style="left:273px;top:552px;width:90px;height:25px;line-height:25px;color:#333"><span style="color:#cc0000">1-0</span>(1-0)</div><div class="t" style="left:364px;top:552px;width:38px;height:25px;line-height:25px;color:#333">12-3</div><div class="t" style="left:403px;top:552px;width:105px;height:25px;line-height:25px;"><span style="color:#0e700e">牛津联队</span></div><div class="t" style="left:509px;top:552px;width:48px;height:25px;line-height:25px;color:#333">0.99</div><div class="t" style="left:558px;top:552px;width:84px;height:25px;line-height:25px;color:#333">一球</div><div class="t" style="left:643px;top:552px;width:51px;height:25px;line-height:25px;color:#333">0.90</div><div class="t" style="left:695px;top:552px;width:65px;height:25px;line-height:25px;color:#333">1.50</div><div class="t" style="left:761px;top:552px;width:65px;height:25px;line-height:25px;color:#333">3.84</div><div class="t" style="left:827px;top:552px;width:67px;height:25px;line-height:25px;color:#333">7.12</div><div class="t" style="left:895px;top:552px;width:38px;height:25px;line-height:25px;color:#0000b0">负</div><div class="t" style="left:934px;top:552px;width:38px;height:25px;line-height:25px;color:#0e700e">走</div><div class="t" style="left:973px;top:552px;width:56px;height:25px;line-height:25px;color:#0000b0">小</div><div class="t" style="left:4px;top:578px;width:80px;height:25px;line-height:25px;color:#fff;-webkit-text-stroke:0.35px #fff">英冠</div><div class="t" style="left:85px;top:578px;width:75px;height:25px;line-height:25px;color:#333">25-02-01</div><div class="t" style="left:161px;top:578px;width:111px;height:25px;line-height:25px;"><span style="color:#0e700e">牛津联队</span></div><div class="t" style="left:273px;top:578px;width:90px;height:25px;line-height:25px;color:#333"><span style="color:#cc0000">1-1</span>(0-0)</div><div class="t" style="left:364px;top:578px;width:38px;height:25px;line-height:25px;color:#333">5-3</div><div class="t" style="left:403px;top:578px;width:105px;height:25px;line-height:25px;">布里斯托城<span class="bd">2</span></div><div class="t" style="left:509px;top:578px;width:48px;height:25px;line-height:25px;color:#333">0.90</div><div class="t" style="left:558px;top:578px;width:84px;height:25px;line-height:25px;color:#333">受平/半</div><div class="t" style="left:643px;top:578px;width:51px;height:25px;line-height:25px;color:#333">0.99</div><div class="t" style="left:695px;top:578px;width:65px;height:25px;line-height:25px;color:#333">3.12</div><div class="t" style="left:761px;top:578px;width:65px;height:25px;line-height:25px;color:#333">3.11</div><div class="t" style="left:827px;top:578px;width:67px;height:25px;line-height:25px;color:#333">2.35</div><div class="t" style="left:895px;top:578px;width:38px;height:25px;line-height:25px;color:#0e700e">平</div><div class="t" style="left:934px;top:578px;width:38px;height:25px;line-height:25px;color:#d81808">赢</div><div class="t" style="left:973px;top:578px;width:56px;height:25px;line-height:25px;color:#0000b0">小</div><div class="t" style="left:4px;top:604px;width:80px;height:25px;line-height:25px;color:#fff;-webkit-text-stroke:0.35px #fff">英冠</div><div class="t" style="left:85px;top:604px;width:75px;height:25px;line-height:25px;color:#333">25-01-25</div><div class="t" style="left:161px;top:604px;width:111px;height:25px;line-height:25px;">斯托克城</div><div class="t" style="left:273px;top:604px;width:90px;height:25px;line-height:25px;color:#333"><span style="color:#cc0000">0-0</span>(0-0)</div><div class="t" style="left:364px;top:604px;width:38px;height:25px;line-height:25px;color:#333">5-5</div><div class="t" style="left:403px;top:604px;width:105px;height:25px;line-height:25px;"><span style="color:#0e700e">牛津联队</span></div><div class="t" style="left:509px;top:604px;width:48px;height:25px;line-height:25px;color:#333">0.96</div><div class="t" style="left:558px;top:604px;width:84px;height:25px;line-height:25px;color:#333">平/半</div><div class="t" style="left:643px;top:604px;width:51px;height:25px;line-height:25px;color:#333">0.93</div><div class="t" style="left:695px;top:604px;width:65px;height:25px;line-height:25px;color:#333">2.19</div><div class="t" style="left:761px;top:604px;width:65px;height:25px;line-height:25px;color:#333">3.24</div><div class="t" style="left:827px;top:604px;width:67px;height:25px;line-height:25px;color:#333">3.30</div><div class="t" style="left:895px;top:604px;width:38px;height:25px;line-height:25px;color:#0e700e">平</div><div class="t" style="left:934px;top:604px;width:38px;height:25px;line-height:25px;color:#d81808">赢</div><div class="t" style="left:973px;top:604px;width:56px;height:25px;line-height:25px;color:#0000b0">小</div><div class="t" style="left:4px;top:630px;width:80px;height:25px;line-height:25px;color:#fff;-webkit-text-stroke:0.35px #fff">英冠</div><div class="t" style="left:85px;top:630px;width:75px;height:25px;line-height:25px;color:#333">25-01-22</div><div class="t" style="left:161px;top:630px;width:111px;height:25px;line-height:25px;"><span style="color:#0e700e">牛津联队</span></div><div class="t" style="left:273px;top:630px;width:90px;height:25px;line-height:25px;color:#333"><span style="color:#cc0000">3-2</span>(1-2)</div><div class="t" style="left:364px;top:630px;width:38px;height:25px;line-height:25px;color:#333">6-5</div><div class="t" style="left:403px;top:630px;width:105px;height:25px;line-height:25px;">卢顿</div><div class="t" style="left:509px;top:630px;width:48px;height:25px;line-height:25px;color:#333">0.91</div><div class="t" style="left:558px;top:630px;width:84px;height:25px;line-height:25px;color:#333">受平/半</div><div class="t" style="left:643px;top:630px;width:51px;height:25px;line-height:25px;color:#333">0.98</div><div class="t" style="left:695px;top:630px;width:65px;height:25px;line-height:25px;color:#333">3.18</div><div class="t" style="left:761px;top:630px;width:65px;height:25px;line-height:25px;color:#333">3.03</div><div class="t" style="left:827px;top:630px;width:67px;height:25px;line-height:25px;color:#333">2.36</div><div class="t" style="left:895px;top:630px;width:38px;height:25px;line-height:25px;color:#d81808">胜</div><div class="t" style="left:934px;top:630px;width:38px;height:25px;line-height:25px;color:#d81808">赢</div><div class="t" style="left:973px;top:630px;width:56px;height:25px;line-height:25px;color:#d81808">大</div><div class="t" style="left:4px;top:656px;width:80px;height:25px;line-height:25px;color:#fff;-webkit-text-stroke:0.35px #fff">英冠</div><div class="t" style="left:85px;top:656px;width:75px;height:25px;line-height:25px;color:#333">25-01-18</div><div class="t" style="left:161px;top:656px;width:111px;height:25px;line-height:25px;"><span style="color:#0e700e">牛津联队</span></div><div class="t" style="left:273px;top:656px;width:90px;height:25px;line-height:25px;color:#333"><span style="color:#cc0000">1-0</span>(0-0)</div><div class="t" style="left:364px;top:656px;width:38px;height:25px;line-height:25px;color:#333">4-3</div><div class="t" style="left:403px;top:656px;width:105px;height:25px;line-height:25px;">布莱克本</div><div class="t" style="left:509px;top:656px;width:48px;height:25px;line-height:25px;color:#333">0.89</div><div class="t" style="left:558px;top:656px;width:84px;height:25px;line-height:25px;color:#333">受平/半</div><div class="t" style="left:643px;top:656px;width:51px;height:25px;line-height:25px;color:#333">1.00</div><div class="t" style="left:695px;top:656px;width:65px;height:25px;line-height:25px;color:#333">3.23</div><div class="t" style="left:761px;top:656px;width:65px;height:25px;line-height:25px;color:#333">3.14</div><div class="t" style="left:827px;top:656px;width:67px;height:25px;line-height:25px;color:#333">2.27</div><div class="t" style="left:895px;top:656px;width:38px;height:25px;line-height:25px;color:#d81808">胜</div><div class="t" style="left:934px;top:656px;width:38px;height:25px;line-height:25px;color:#d81808">赢</div><div class="t" style="left:973px;top:656px;width:56px;height:25px;line-height:25px;color:#0000b0">小</div><div class="t" style="left:4px;top:682px;width:80px;height:25px;line-height:25px;color:#fff;-webkit-text-stroke:0.35px #fff">英冠</div><div class="t" style="left:85px;top:682px;width:75px;height:25px;line-height:25px;color:#333">25-01-15</div><div class="t" style="left:161px;top:682px;width:111px;height:25px;line-height:25px;">普利茅斯</div><div class="t" style="left:273px;top:682px;width:90px;height:25px;line-height:25px;color:#333"><span style="color:#cc0000">1-1</span>(0-1)</div><div class="t" style="left:364px;top:682px;width:38px;height:25px;line-height:25px;color:#333">6-3</div><div class="t" style="left:403px;top:682px;width:105px;height:25px;line-height:25px;"><span style="color:#0e700e">牛津联队</span></div><div class="t" style="left:509px;top:682px;width:48px;height:25px;line-height:25px;color:#333">0.89</div><div class="t" style="left:558px;top:682px;width:84px;height:25px;line-height:25px;color:#333">平/半</div><div class="t" style="left:643px;top:682px;width:51px;height:25px;line-height:25px;color:#333">1.00</div><div class="t" style="left:695px;top:682px;width:65px;height:25px;line-height:25px;color:#333">2.24</div><div class="t" style="left:761px;top:682px;width:65px;height:25px;line-height:25px;color:#333">3.25</div><div class="t" style="left:827px;top:682px;width:67px;height:25px;line-height:25px;color:#333">3.24</div><div class="t" style="left:895px;top:682px;width:38px;height:25px;line-height:25px;color:#0e700e">平</div><div class="t" style="left:934px;top:682px;width:38px;height:25px;line-height:25px;color:#d81808">赢</div><div class="t" style="left:973px;top:682px;width:56px;height:25px;line-height:25px;color:#0000b0">小</div><div class="t" style="left:3px;top:708px;width:1027px;height:25px;line-height:25px;color:#333;letter-spacing:0.18px">近<span class="r">10</span>场,胜2平4负4, 胜率:<span class="r">20%</span> 让胜率:<span class="r">60%</span> 大率:<span class="r">20%</span> 单率:<span class="r">40%</span></div><div class="pl"></div></body></html>
